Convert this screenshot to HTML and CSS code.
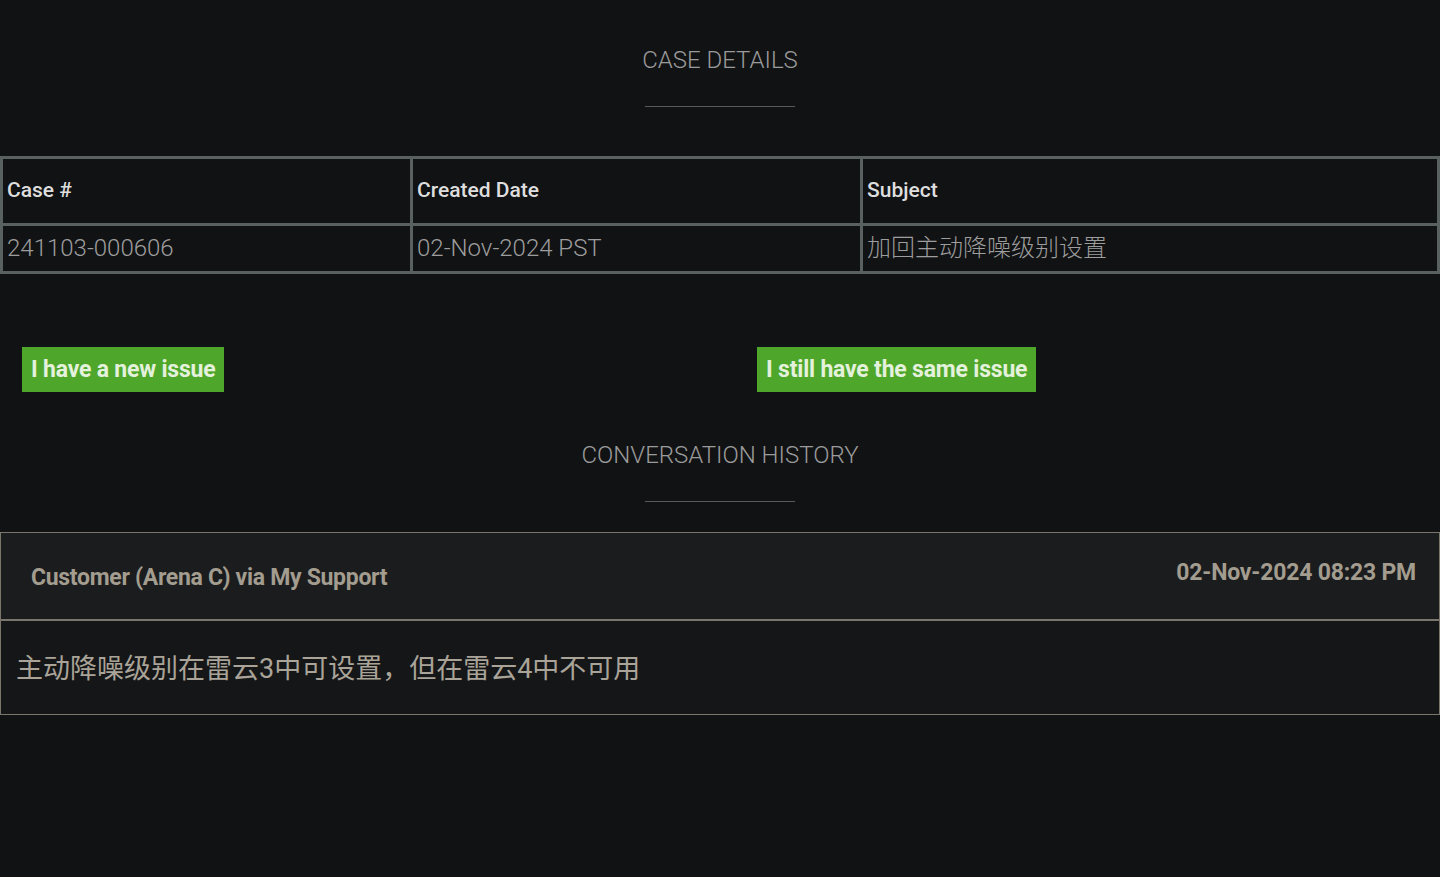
FILE: index.html
```html
<!DOCTYPE html>
<html lang="en">
<head>
<meta charset="utf-8">
<title>Case Details</title>
<link rel="stylesheet" href="styles.css">
</head>
<body>
<main class="page">
  <section class="section-head">
    <h2 class="section-title">CASE DETAILS</h2>
    <hr class="section-rule">
  </section>

  <table class="case-table">
    <colgroup>
      <col class="col-case">
      <col class="col-date">
      <col class="col-subject">
    </colgroup>
    <thead>
      <tr>
        <th>Case #</th>
        <th>Created Date</th>
        <th>Subject</th>
      </tr>
    </thead>
    <tbody>
      <tr>
        <td>241103-000606</td>
        <td>02-Nov-2024 PST</td>
        <td class="cjk">加回主动降噪级别设置</td>
      </tr>
    </tbody>
  </table>

  <div class="actions">
    <div class="action-col"><button class="btn">I have a new issue</button></div>
    <div class="action-col"><button class="btn">I still have the same issue</button></div>
  </div>

  <section class="section-head section-head--conv">
    <h2 class="section-title">CONVERSATION HISTORY</h2>
    <hr class="section-rule">
  </section>

  <article class="message">
    <header class="message-head">
      <span class="message-author">Customer (Arena C) via My Support</span>
      <span class="message-date">02-Nov-2024 08:23 PM</span>
    </header>
    <div class="message-body cjk">主动降噪级别在雷云3中可设置，但在雷云4中不可用</div>
  </article>
</main>
</body>
</html>
```

FILE: styles.css
```css
html, body {
  margin: 0;
  padding: 0;
  background: #111214;
}

body {
  font-family: Roboto, "Noto Sans CJK SC", sans-serif;
  color: #9a9a9a;
}

.page {
  width: 1440px;
  padding-top: 44px;
}

.section-head {
  display: flex;
  flex-direction: column;
  align-items: center;
}

.section-title {
  margin: 0;
  font-size: 24px;
  font-weight: 300;
  line-height: 32px;
  color: #9b9b9b;
  letter-spacing: 0;
}

.section-rule {
  width: 150px;
  margin: 30px 0 0;
  border: 0;
  border-top: 1px solid #5a5a5a;
  height: 0;
}

.case-table {
  margin-top: 49px;
  width: 1440px;
  border-collapse: collapse;
  table-layout: fixed;
  border: 3px solid #586060;
}

.col-case { width: 410px; }
.col-date { width: 450px; }

.case-table th,
.case-table td {
  border: 3px solid #586060;
  text-align: left;
  vertical-align: top;
  white-space: nowrap;
}

.case-table th {
  padding: 19px 4px 21px;
  font-size: 21px;
  line-height: 24px;
  font-weight: 500;
  color: #dedede;
}

.case-table td {
  padding: 8px 4px 9px;
  font-size: 24px;
  line-height: 28px;
  font-weight: 300;
  color: #9d9d9d;
}

.cjk {
  font-family: Roboto, "Noto Sans CJK SC", sans-serif;
}

.actions {
  display: grid;
  grid-template-columns: 735px 1fr;
  margin-top: 73px;
  padding-left: 22px;
}

.btn {
  display: inline-block;
  height: 45px;
  padding: 0 9px;
  border: 0;
  border-radius: 0;
  background: #4ea72a;
  color: #e4f1dc;
  font-family: Roboto, sans-serif;
  font-size: 23px;
  font-weight: 700;
  letter-spacing: -0.2px;
  cursor: pointer;
}

.section-head--conv {
  margin-top: 47px;
}

.message {
  margin-top: 30px;
  border: 1px solid #7b766b;
  background: #151618;
}

.message-head {
  display: flex;
  justify-content: space-between;
  align-items: flex-start;
  height: 86px;
  background: #1b1c1e;
  border-bottom: 2px solid #7b766b;
  color: #a39d8f;
  font-weight: 700;
  padding: 0 23px 0 30px;
}

.message-author {
  font-size: 23px;
  margin-top: 31px;
  letter-spacing: -0.3px;
}

.message-date {
  font-size: 23px;
  margin-top: 26px;
  letter-spacing: -0.2px;
}

.message-body {
  height: 90px;
  display: flex;
  align-items: center;
  padding: 0 15px 3px;
  font-size: 27px;
  color: #aaa498;
  font-weight: 400;
}
```
